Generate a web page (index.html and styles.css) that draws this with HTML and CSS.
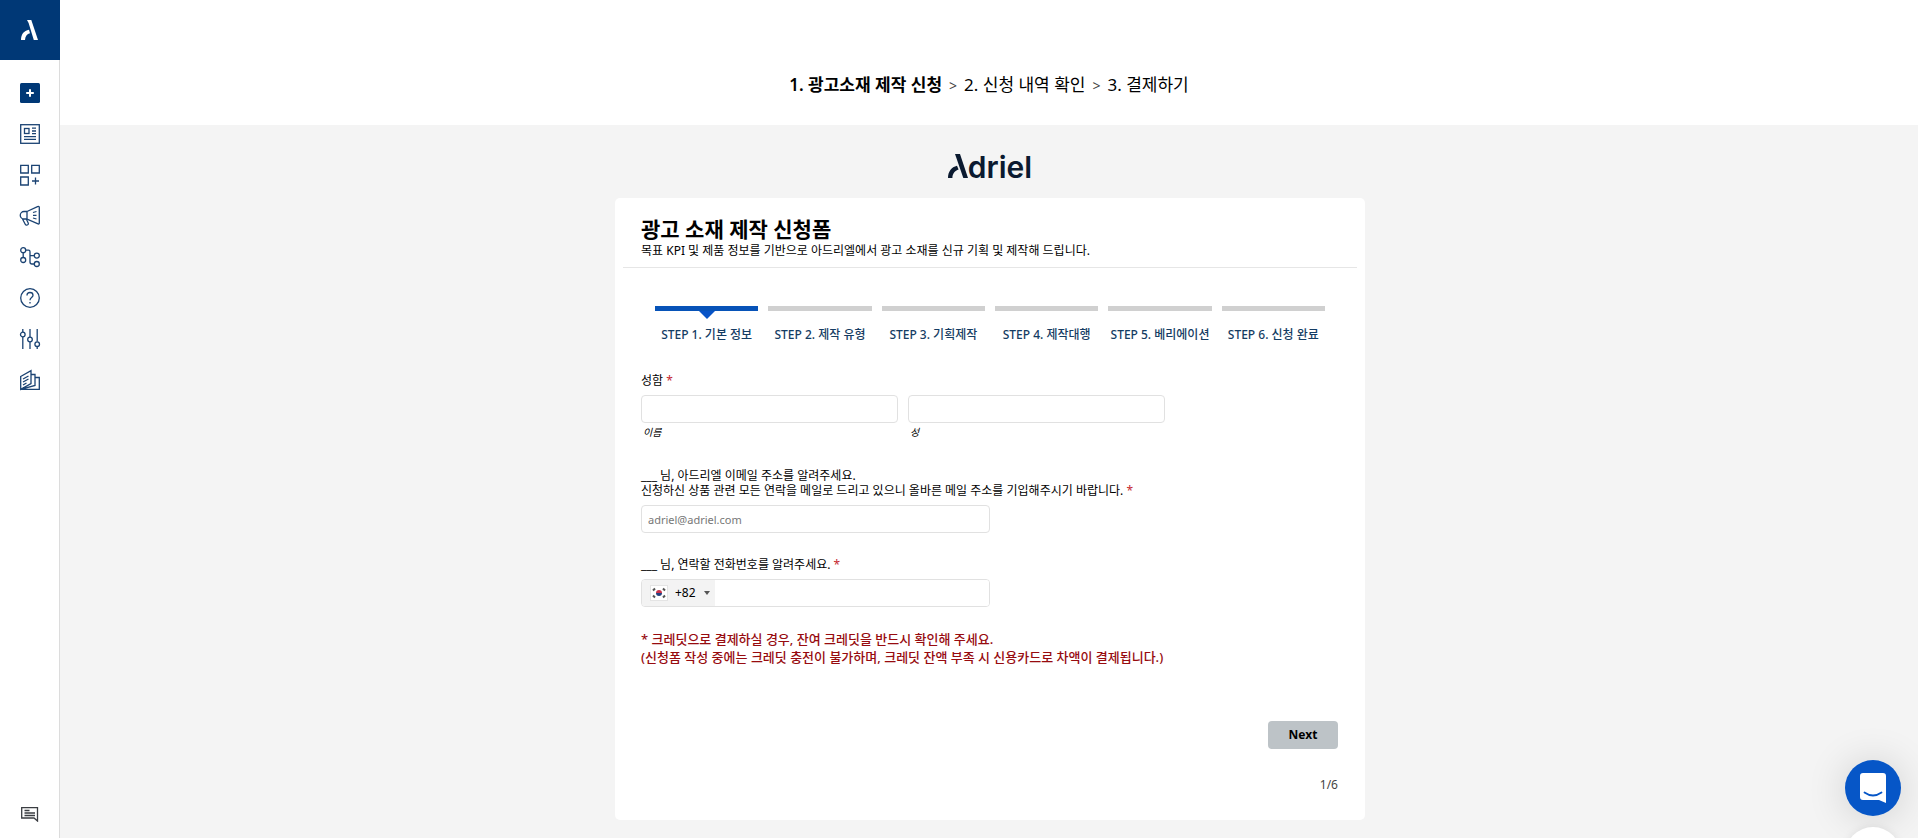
FILE: index.html
```html
<!DOCTYPE html>
<html lang="ko">
<head>
<meta charset="utf-8">
<title>광고 소재 제작 신청폼</title>
<link rel="stylesheet" href="styles.css">
</head>
<body>
<aside class="sidebar">
  <a class="brand" href="#" aria-label="Adriel">
    <svg width="18" height="20" viewBox="0 0 18 20" fill="#fff"><path d="M6 0H10.300L17 20H12.800L7.600 3Z"/><path d="M0 20C0 14.500 2.800 10.600 8 9.800L9 13.200C6 14 4.200 16.200 4 20Z"/></svg>
  </a>
  <nav class="menu" aria-label="메뉴">
    <a href="#" aria-label="추가"><svg viewBox="0 0 20 20"><rect width="20" height="20" rx="1.500" fill="#003876"/><path d="M10 6.200V13.800M6.200 10H13.800" stroke="#fff" stroke-width="2"/></svg></a>
    <a href="#" aria-label="대시보드"><svg class="line" viewBox="0 0 20 20"><rect x=".7" y=".7" width="18.600" height="18.600"/><rect x="4.500" y="4.500" width="4.500" height="5"/><path d="M12 4.200H16M12 7H16M12 9.700H16M4 12.700H16M4 15.400H16"/></svg></a>
    <a href="#" aria-label="위젯"><svg class="line" viewBox="0 0 20 20"><path d="M.7.300H8.300V8H.7ZM11.700.300H19.300V8H11.700ZM.7 12H8.300V20H.7ZM15.500 12.500V19.500M12 16H19"/></svg></a>
    <a href="#" aria-label="캠페인"><svg class="line" viewBox="0 0 20 20"><path d="M7 5.500L17.500.7Q19.300 0 19.300 1.500V17Q19.300 18.500 17.500 17.700L7 13Z"/><path d="M7 5.500H4A3.700 3.700 0 0 0 4 13H7M2.500 13L5.500 18.700Q6 19.500 7.200 19L8 18.500Q8.700 18 8.200 17L6.300 13M13 6.500L16.500 5.500M13 9.300H16.500M13 12L16.500 13"/></svg></a>
    <a href="#" aria-label="플로우"><svg class="line" viewBox="0 0 20 20"><circle cx="3.200" cy="3.200" r="2.500"/><circle cx="3.200" cy="13" r="2.500"/><circle cx="16.800" cy="8.600" r="2.500"/><circle cx="16.800" cy="17" r="2.500"/><path d="M3.200 5.700V10.500M5.700 3.200H8.500Q10 3.200 10 4.700V15Q10 17 12 17H14.300M10 8.600H14.300"/></svg></a>
    <a href="#" aria-label="도움말"><svg class="line" viewBox="0 0 20 20"><circle cx="10" cy="10" r="9.300"/><path d="M7 7.500C7 5.500 8.200 4.500 10 4.500S13 5.600 13 7.200C13 9.500 10 9.500 10 12.200M10 14V15.600"/></svg></a>
    <a href="#" aria-label="설정"><svg class="line" viewBox="0 0 20 20"><path d="M2.800 0V3M2.800 8V20M10 0V8M10 13V20M17.200 0V12.500M17.200 17.500V20"/><circle cx="2.800" cy="5.500" r="2.300"/><circle cx="10" cy="10.500" r="2.300"/><circle cx="17.200" cy="15.200" r="2.300"/></svg></a>
    <a href="#" aria-label="자료실"><svg class="line" viewBox="0 0 20 20"><path d="M.7 6.500L11 .7V13.500L.7 19.300ZM11 4.500H15V15.500L.7 19.300M15 7.500H19.300V19.300H.7M3 9L8.500 6M3 12L8.500 9M3 15L6.500 13"/></svg></a>
  </nav>
  <a class="feedback" href="#" aria-label="의견 보내기"><svg viewBox="0 0 18 15" fill="none" stroke="#3a3d42" stroke-width="1.300"><path d="M.7.700H16.500V14L13 11H.7Z"/><path d="M3.500 3.500H8.500M3.500 6H14M3.500 8.500H14"/></svg></a>
</aside>
<div class="page">
  <header class="crumbs">
    <ol>
      <li class="current">1. 광고소재 제작 신청</li>
      <li>2. 신청 내역 확인</li>
      <li>3. 결제하기</li>
    </ol>
  </header>
  <main class="content">
    <div class="wordmark"><svg width="20" height="25" viewBox="0 0 20 25" fill="#0b1a30"><path d="M7 1H12L20 25H15.300Z"/><path d="M0 25C0 18.500 3.400 14 9 12.700L10.600 16.400C7 17.600 4.400 20.500 4.400 25Z"/></svg><span>driel</span></div>
    <form class="card">
      <div class="card-head">
        <h1>광고 소재 제작 신청폼</h1>
        <p>목표 KPI 및 제품 정보를 기반으로 아드리엘에서 광고 소재를 신규 기획 및 제작해 드립니다.</p>
      </div>
      <ol class="steps">
        <li class="active">STEP 1. 기본 정보</li>
        <li>STEP 2. 제작 유형</li>
        <li>STEP 3. 기획제작</li>
        <li>STEP 4. 제작대행</li>
        <li>STEP 5. 베리에이션</li>
        <li>STEP 6. 신청 완료</li>
      </ol>
      <fieldset class="field">
        <legend>성함 <b>*</b></legend>
        <div class="names">
          <div><input id="first" type="text"><label for="first">이름</label></div>
          <div><input id="last" type="text"><label for="last">성</label></div>
        </div>
      </fieldset>
      <div class="field email">
        <label for="email">___ 님, 아드리엘 이메일 주소를 알려주세요.<br>신청하신 상품 관련 모든 연락을 메일로 드리고 있으니 올바른 메일 주소를 기입해주시기 바랍니다. <b>*</b></label>
        <input id="email" type="email" placeholder="adriel@adriel.com">
      </div>
      <div class="field phone-field">
        <label for="phone">___ 님, 연락할 전화번호를 알려주세요. <b>*</b></label>
        <div class="phone">
          <div class="country">
            <svg class="flag" width="16" height="14" viewBox="0 0 16 14"><rect width="16" height="14" fill="#fff"/><path d="M5 7A3 3 0 0 1 11 7Z" fill="#c8324a"/><path d="M5 7A3 3 0 0 0 11 7Z" fill="#24407f"/><path d="M2 4.500L4 2.500M12 2.500L14 4.500M2 9.500L4 11.500M12 11.500L14 9.500" stroke="#555" stroke-width="2"/></svg>
            <select aria-label="국가 번호"><option>+82</option></select>
            <svg class="caret" width="6" height="4" viewBox="0 0 6 4"><path d="M0 0H6L3 4Z" fill="#555"/></svg>
          </div>
          <input id="phone" type="tel">
        </div>
      </div>
      <p class="notice">* 크레딧으로 결제하실 경우, 잔여 크레딧을 반드시 확인해 주세요.<br>(신청폼 작성 중에는 크레딧 충전이 불가하며, 크레딧 잔액 부족 시 신용카드로 차액이 결제됩니다.)</p>
      <div class="actions">
        <button type="button">Next</button>
        <span>1/6</span>
      </div>
    </form>
  </main>
</div>
<button class="chat" type="button" aria-label="채팅 열기"><svg width="26" height="30" viewBox="0 0 26 30"><path d="M3 0H23Q26 0 26 3V30L19 27H3Q0 27 0 24V3Q0 0 3 0Z" fill="#fff"/><path d="M4.500 19.500Q13 25.500 21.500 19.500" fill="none" stroke="#0656c7" stroke-width="1.800" stroke-linecap="round"/></svg></button>
<button class="extra" type="button" aria-label="더보기"></button>
</body>
</html>
```
FILE: styles.css
```css
* { box-sizing: border-box; }
body {
  margin: 0;
  min-height: 100vh;
  display: flex;
  background: #f4f4f4;
  color: #000;
  font: 12px/14px "Noto Sans", "Noto Sans CJK KR", sans-serif;
}
h1, p, ol, fieldset { margin: 0; padding: 0; border: 0; }
ol { list-style: none; }
input, button, select { font: inherit; color: inherit; }

.sidebar {
  width: 60px;
  flex: none;
  display: flex;
  flex-direction: column;
  background: #fff;
  border-right: 1px solid #dcdcdc;
}
.brand {
  height: 60px;
  margin-right: -1px;
  display: grid;
  place-items: center;
  background: #003876;
}
.menu {
  display: grid;
  gap: 21px;
  justify-content: center;
  padding-top: 23px;
}
.menu a { display: flex; }
.menu svg { width: 20px; height: 20px; overflow: visible; }
.line { fill: none; stroke: #1b4373; stroke-width: 1.3; }
.feedback { margin: auto auto 16px; display: flex; }
.feedback svg { width: 18px; height: 15px; }

.page { flex: 1; display: flex; flex-direction: column; }
.crumbs { background: #fff; padding: 73px 0 27px; }
.crumbs ol { display: flex; justify-content: center; font-size: 17px; line-height: 24px; }
.crumbs .current { font-weight: 600; }
.crumbs li + li::before { content: ">"; margin: 0 7px; color: #444; font-size: 14px; font-weight: 400; }

.content { display: flex; flex-direction: column; align-items: center; padding: 26px 18px 18px 20px; }
.wordmark { display: flex; align-items: baseline; height: 28px; margin-bottom: 19px; color: #0b1a30; }
.wordmark span { font: 600 30px/32px Inter, sans-serif; }
.card { width: 100%; max-width: 750px; padding: 0 8px 28px; background: #fff; border-radius: 5px; }
.card-head { padding: 18px 18px 8px; border-bottom: 1px solid #e6e6e6; }
.card-head h1 { font-size: 21px; line-height: 26px; font-weight: 600; }
.card-head p { line-height: 17px; }

.steps { display: grid; grid-template-columns: repeat(6, 1fr); gap: 10px; margin: 38px 32px 0; }
.steps li {
  position: relative;
  border-top: 5px solid #d0d0d0;
  padding-top: 16px;
  line-height: 16px;
  font-weight: 500;
  text-align: center;
  white-space: nowrap;
  color: #143c63;
}
.steps .active { border-color: #0753b8; }
.steps .active::before {
  content: "";
  position: absolute;
  top: 0;
  left: calc(50% - 8px);
  border: 8px solid transparent;
  border-top-color: #0753c7;
  border-bottom: 0;
}

.field { padding: 0 18px; }
.field b { color: #c5282f; font-weight: 400; }
fieldset.field { margin-top: 31px; }
legend { padding: 0; }
.field input {
  display: block;
  width: 100%;
  height: 28px;
  padding: 0 6px;
  border: 1px solid #e1e1e1;
  border-radius: 4px;
  background: #fff;
}
.field input::placeholder { color: #777; font-size: 11px; }
.names { display: grid; grid-template-columns: 257px 257px; gap: 10px; padding-top: 7px; }
.names label { display: block; padding: 2px 2px 0; font-size: 10px; font-style: italic; }
.email { margin-top: 29px; }
.email input { max-width: 349px; margin-top: 7px; }
.email label { display: block; line-height: 15px; }
.phone-field { margin-top: 25px; }
.phone-field label { display: block; }
.phone { display: flex; max-width: 349px; margin-top: 7px; border: 1px solid #e1e1e1; border-radius: 4px; overflow: hidden; }
.phone input { flex: 1; min-width: 0; height: 26px; border: 0; border-radius: 0; }
.country { display: flex; align-items: center; width: 73px; padding: 0 5px 0 9px; background: #f3f3f3; }
.flag { flex: none; outline: 1px solid #e4e4e4; }
.country select { flex: 1; min-width: 0; padding: 0 0 0 8px; border: 0; background: none; appearance: none; }
.notice { padding: 23px 18px 0; font-size: 13px; line-height: 18px; font-weight: 500; color: #970b0f; }
.actions { display: flex; flex-direction: column; align-items: flex-end; gap: 29px; padding: 55px 19px 0; color: #444; }
.actions button { width: 70px; height: 28px; border: 0; border-radius: 4px; background: #bdc3c7; color: #000; font-weight: 700; }

.chat, .extra { position: fixed; right: 17px; width: 56px; height: 56px; padding: 0; border: 0; border-radius: 50%; }
.chat { bottom: 22px; display: grid; place-items: center; background: #0656c7; box-shadow: 0 2px 40px rgba(0, 0, 0, .16); }
.extra { bottom: -45px; background: #fff; box-shadow: 0 0 8px rgba(0, 0, 0, .08); }
```
